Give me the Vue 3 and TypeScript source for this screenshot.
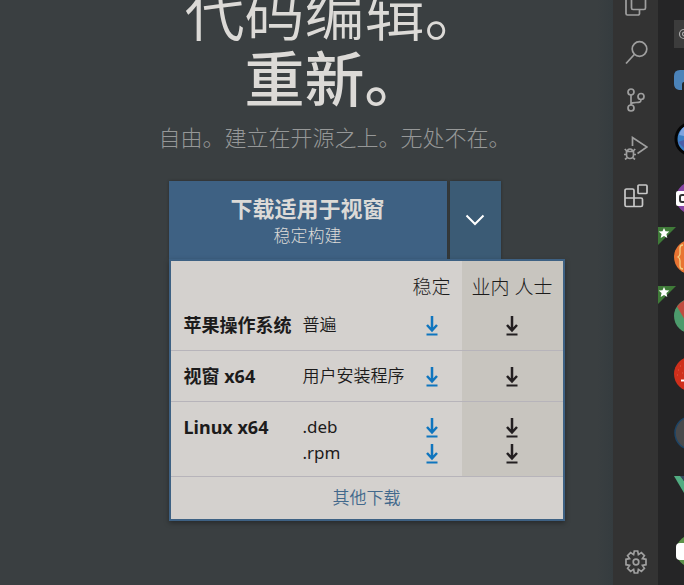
<script setup lang="ts">
interface Build {
  name: string
  kind: string
  last: boolean
  first: boolean
}

const builds: Build[] = [
  { name: '苹果操作系统', kind: '普遍', first: true, last: true },
  { name: '视窗 x64', kind: '用户安装程序', first: true, last: true },
  { name: 'Linux x64', kind: '.deb', first: true, last: false },
  { name: '', kind: '.rpm', first: false, last: true },
]
</script>

<template>
  <div class="page">
    <main class="hero">
      <h1 class="title">
        <span>代码编辑。</span>
        <strong>重新。</strong>
      </h1>
      <p class="subtitle">自由。建立在开源之上。无处不在。</p>

      <div class="download">
        <button class="primary" type="button">
          <span class="primary-label">下载适用于视窗</span>
          <span class="primary-note">稳定构建</span>
        </button>
        <button class="toggle" type="button" aria-label="其他下载" aria-expanded="true">
          <svg width="20" height="12" viewBox="0 0 20 12" fill="none" stroke="#fff" stroke-width="2">
            <path d="M1.5 1.5 10 10l8.500-8.500" />
          </svg>
        </button>

        <div class="menu">
          <table class="builds">
            <colgroup>
              <col class="col-name" />
              <col />
              <col class="col-stable" />
              <col class="col-insiders" />
            </colgroup>
            <thead>
              <tr>
                <th colspan="2"></th>
                <th class="stable" scope="col">稳定</th>
                <th class="insiders" scope="col">业内 人士</th>
              </tr>
            </thead>
            <tbody>
              <tr v-for="b in builds" :key="b.kind" :class="{ first: b.first, last: b.last }">
                <th class="name" scope="row">{{ b.name }}</th>
                <td class="kind">{{ b.kind }}</td>
                <td class="stable">
                  <a href="#" :aria-label="b.kind">
                    <svg class="arrow" viewBox="0 0 12 20" fill="none" stroke="currentColor" stroke-width="2.500">
                      <path d="M6 0v15M1 9l5 5.500L11 9" /><path d="M.5 18.500h11" stroke-width="2" />
                    </svg>
                  </a>
                </td>
                <td class="insiders">
                  <a href="#" :aria-label="b.kind">
                    <svg class="arrow" viewBox="0 0 12 20" fill="none" stroke="currentColor" stroke-width="2.500">
                      <path d="M6 0v15M1 9l5 5.500L11 9" /><path d="M.5 18.500h11" stroke-width="2" />
                    </svg>
                  </a>
                </td>
              </tr>
            </tbody>
          </table>
          <a class="other" href="#">其他下载</a>
        </div>
      </div>
    </main>

    <aside class="editor">
      <nav class="activity">
        <button type="button" aria-label="Explorer">
          <svg viewBox="0 0 24 24"><path d="M9 1.500h7l5.500 5.500v9a1.500 1.500 0 0 1-1.500 1.500H9A1.500 1.500 0 0 1 7.500 16V3A1.500 1.500 0 0 1 9 1.500zM7.500 6.500H3.500A1.500 1.500 0 0 0 2 8v13.500A1.500 1.500 0 0 0 3.500 23H14a1.500 1.500 0 0 0 1.500-1.500v-4" /></svg>
        </button>
        <button type="button" aria-label="Search">
          <svg viewBox="0 0 24 24"><circle cx="15.500" cy="9" r="7.300" /><path d="M10.300 14.500 2 23.500" /></svg>
        </button>
        <button type="button" aria-label="Source control">
          <svg viewBox="0 0 24 24"><circle cx="7" cy="4" r="3" /><circle cx="7" cy="20" r="3" /><circle cx="17" cy="8.500" r="3" /><path d="M7 7v10M17 11.500c0 3-2 3-5 3s-5 0-5 2.500" /></svg>
        </button>
        <button type="button" aria-label="Run and debug">
          <svg viewBox="0 0 24 24"><path d="M8.500 10V1.500L23 11l-9.500 6.500" /><path d="M2.500 15.500h7v3.500a3.500 3.500 0 0 1-7 0zM3.500 15.500a2.500 2.500 0 0 1 5 0M.8 13l2 2M11.200 13l-2 2M0 18.500h2.500M9.500 18.500H12M1 23.500l2.300-2M11 23.500l-2.300-2" /></svg>
        </button>
        <button class="bright" type="button" aria-label="Extensions">
          <svg viewBox="0 0 24 24"><rect x="14" y="1" width="9" height="8.500" rx="1" /><path d="M2.500 5h6A1.500 1.500 0 0 1 10 6.500V14h7a1.500 1.500 0 0 1 1.500 1.500V21a1.500 1.500 0 0 1-1.500 1.500H2.500A1.500 1.500 0 0 1 1 21V6.500A1.500 1.500 0 0 1 2.500 5zM1 14h9v8.500" /></svg>
        </button>
        <button class="settings" type="button" aria-label="Settings">
          <svg viewBox="0 0 24 24"><path d="M10.300 1h3.400l.7 3.600 3-2 3 3-2 3 3.600.7v5.400l-3.600.7 2 3-3 3-3-2-.7 3.600h-3.400l-.7-3.600-3 2-3-3 2-3-3.600-.7V9.300l3.600-.7-2-3 3-3 3 2z" /><circle cx="12" cy="12" r="2.800" /></svg>
        </button>
      </nav>

      <div class="extensions">
        <div class="search"><svg viewBox="0 0 12 28" fill="none" stroke="#aaa" stroke-width="1.200"><circle cx="10" cy="14" r="4.500" /><circle cx="10.500" cy="14" r="2" /></svg></div>
        <div class="item">
          <svg viewBox="0 0 26 36"><path d="M26 8h-4q-6 0-6 6v8q0 5 5 6h3v-5q0-3 2-3z" fill="#4b83b9" /></svg>
        </div>
        <div class="item">
          <svg viewBox="0 0 26 36"><circle cx="34" cy="18" r="16" fill="#3b7fc4" stroke="#050505" stroke-width="3" /><path d="M21 14q2-6 5-8v9z" fill="#7ea4e0" /><path d="M20 21l6 6v-8z" fill="#4a5da8" /></svg>
        </div>
        <div class="item">
          <svg viewBox="0 0 26 36"><circle cx="34" cy="18" r="16" fill="#8845a5" /><rect x="18" y="11" width="12" height="15" rx="2" fill="#fff" /><path d="M27 15h-3q-2 0-2 2v3q0 2 2 2h3" fill="none" stroke="#333" stroke-width="2" /></svg>
        </div>
        <div class="item">
          <svg viewBox="0 0 26 36"><circle cx="33.500" cy="18" r="17.500" fill="#e87432" /><path d="M25 6q-3 0-3 3v5q0 3-2 4 2 1 2 4v5q0 3 3 3" fill="none" stroke="#f2cf82" stroke-width="1.300" /></svg>
          <svg class="badge" viewBox="0 0 18 18"><path d="M0 0h18L0 18z" fill="#3f7a38" /><path d="M6 1l1.500 3.300 3.800.3-2.900 2.500.9 3.800L6 9l-3.300 1.900.9-3.800L.7 4.600l3.800-.3z" fill="#fff" /></svg>
        </div>
        <div class="item">
          <svg viewBox="0 0 26 36"><circle cx="33.500" cy="18" r="17.500" fill="#4d9b6c" /><path d="M26 2.500q-4 2-7 6l7 12z" fill="#c04c3f" /></svg>
          <svg class="badge" viewBox="0 0 18 18"><path d="M0 0h18L0 18z" fill="#3f7a38" /><path d="M6 1l1.500 3.300 3.800.3-2.900 2.500.9 3.800L6 9l-3.300 1.900.9-3.800L.7 4.600l3.800-.3z" fill="#fff" /></svg>
        </div>
        <div class="item">
          <svg viewBox="0 0 26 36"><circle cx="33.500" cy="18" r="17.500" fill="#cf2f1b" /><path d="M23 24.500h3" stroke="#fff" stroke-width="2" /><path d="M20 14h1M22 10h1M19 19h1M24 17h1" stroke="#e35c46" /></svg>
        </div>
        <div class="item">
          <svg viewBox="0 0 26 36"><circle cx="33.500" cy="18" r="16.500" fill="#48494b" stroke="#1d4567" stroke-width="1.500" /></svg>
        </div>
        <div class="item">
          <svg viewBox="0 0 26 36"><path d="M16 2h7l3 5v12z" fill="#52ad82" /><path d="M22 2h4v5z" fill="#35495e" /></svg>
        </div>
        <div class="item">
          <svg viewBox="0 0 26 36"><circle cx="34" cy="18" r="16" fill="#5d934b" /><rect x="18" y="10" width="12" height="17" rx="4" fill="#fff" /></svg>
        </div>
      </div>
    </aside>
  </div>
</template>

<style>
body {
  background: #3a3f41;
}
</style>

<style scoped>
.page {
  display: flex;
  height: 100vh;
  overflow: hidden;
  background: #3a3f41;
  color: #dcdad7;
  font-family: "Noto Sans", "Noto Sans CJK SC", sans-serif;
  font-weight: 300;
}

.page * {
  box-sizing: border-box;
}

.hero {
  flex: 1;
  display: flex;
  flex-direction: column;
  align-items: center;
  padding-left: 56px;
  background: linear-gradient(to left, #353c3f, #3a3f41 16px);
}

.title {
  display: flex;
  flex-direction: column;
  align-items: center;
  margin: -23px 0 0;
  font-family: "Noto Sans CJK SC", sans-serif;
  font-size: 60px;
  line-height: 66px;
  font-weight: 350;
}

.title strong {
  font-weight: 500;
}

.subtitle {
  margin: 12px 0 0;
  font-size: 22px;
  line-height: 32px;
  color: #969898;
  white-space: nowrap;
}

.download {
  position: relative;
  display: flex;
  gap: 3px;
  margin-top: 28px;
}

.primary,
.toggle {
  border: 0;
  padding: 0;
  height: 78px;
  color: inherit;
  font: inherit;
  box-shadow: 0 0 3px rgba(0, 0, 0, 0.3);
}

.primary {
  display: flex;
  flex-direction: column;
  align-items: center;
  justify-content: center;
  width: 278px;
  padding-top: 4px;
  background: #3e6183;
}

.primary-label {
  font-size: 22px;
  line-height: 28px;
  font-weight: 700;
}

.primary-note {
  font-size: 17px;
  line-height: 28px;
}

.toggle {
  display: flex;
  align-items: center;
  justify-content: center;
  width: 51px;
  background: #3b5b75;
}

.menu {
  position: absolute;
  top: 100%;
  left: 0;
  width: 396px;
  border: 2px solid #3e6183;
  background: #d4d1ce;
  color: #1c1b1b;
  box-shadow: 0 2px 5px rgba(0, 0, 0, 0.35);
}

.builds {
  width: 100%;
  border-spacing: 0;
  table-layout: fixed;
  font-size: 17px;
  line-height: 26px;
  white-space: nowrap;
}

.col-name {
  width: 120px;
}

.col-stable {
  width: 60px;
}

.col-insiders {
  width: 101px;
}

.builds th,
.builds td {
  padding: 0;
  height: 26px;
  vertical-align: top;
  text-align: left;
}

.builds thead th {
  padding-top: 13px;
  font-size: 19px;
  font-weight: 300;
}

.builds .stable,
.builds .insiders {
  text-align: center;
}

.builds .insiders {
  background: #c8c5bf;
}

.builds tbody .name {
  padding-left: 13px;
  font-size: 18px;
  font-weight: 700;
}

.builds tbody .kind {
  padding-left: 12px;
  font-weight: 350;
}

.builds tr:not(.first.last) .kind {
  font-weight: 400;
}

.builds .first > * {
  padding-top: 12px;
}

.builds .last > * {
  padding-bottom: 12px;
  border-bottom: 1px solid #b7b4ba;
}

.builds .last:not(.first) > * {
  padding-bottom: 10px;
}

.builds a {
  display: flex;
  align-items: flex-end;
  justify-content: center;
  height: 24px;
  color: #0f75be;
}

.builds .insiders a {
  color: #231f20;
}

.arrow {
  width: 12px;
  height: 20px;
}

.other {
  display: block;
  color: #43698c;
  font-size: 17px;
  font-weight: 350;
  line-height: 42px;
  text-align: center;
  text-decoration: none;
}

.editor {
  display: flex;
  background: #252526;
}

.activity {
  display: flex;
  flex-direction: column;
  width: 45px;
  margin: -20px 0 -1px;
  background: #333;
}

.activity button {
  display: flex;
  align-items: center;
  justify-content: center;
  height: 48px;
  border: 0;
  padding: 0;
  background: none;
  color: #9f9f9f;
}

.activity .bright {
  color: #c8c8c8;
}

.activity .settings {
  margin-top: auto;
}

.activity svg {
  width: 24px;
  height: 24px;
  fill: none;
  stroke: currentColor;
  stroke-width: 1.7;
}

.extensions {
  display: flex;
  flex-direction: column;
  width: 26px;
  padding: 20px 0 5px;
  overflow: hidden;
}

.search {
  height: 28px;
  margin: 0 0 3px 16px;
  background: #3c3c3c;
}

.search svg {
  display: block;
  width: 12px;
  height: 28px;
}

.item {
  position: relative;
  flex: 1;
  display: flex;
  align-items: center;
}

.item svg {
  flex: none;
  width: 26px;
  height: 36px;
}

.item .badge {
  position: absolute;
  top: 0;
  left: 0;
  width: 18px;
  height: 18px;
}
</style>
